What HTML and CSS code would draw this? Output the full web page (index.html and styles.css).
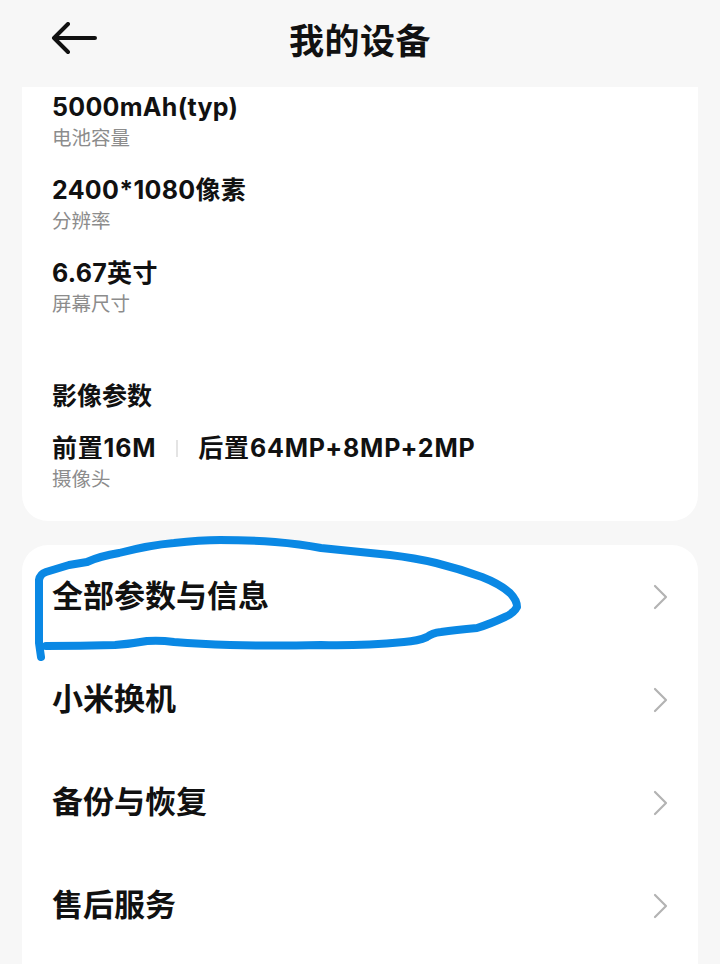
FILE: index.html
```html
<!DOCTYPE html>
<html lang="zh-CN">
<head>
    <meta charset="UTF-8">
    <meta name="viewport" content="width=device-width, initial-scale=1.0">
    <title>我的设备</title>
    <link rel="stylesheet" href="styles.css">
</head>
<body>
    <header class="top-bar">
        <div class="back-btn">
            <svg width="46" height="34" viewBox="0 0 46 34">
                <path d="M44 16H3M17 2L3 16l14 14" fill="none" stroke="#111" stroke-width="4" stroke-linecap="round" stroke-linejoin="round"/>
            </svg>
        </div>
        <h1 class="page-title">我的设备</h1>
        <div></div>
    </header>

    <section class="card spec-card">
        <div class="spec">
            <div class="spec-value">5000mAh(typ)</div>
            <div class="spec-label">电池容量</div>
        </div>
        <div class="spec">
            <div class="spec-value">2400*1080像素</div>
            <div class="spec-label">分辨率</div>
        </div>
        <div class="spec">
            <div class="spec-value">6.67英寸</div>
            <div class="spec-label">屏幕尺寸</div>
        </div>

        <h2 class="spec-heading">影像参数</h2>
        <div class="spec">
            <div class="spec-value camera">
                <span>前置16M</span>
                <span class="divider"></span>
                <span>后置64MP+8MP+2MP</span>
            </div>
            <div class="spec-label">摄像头</div>
        </div>
    </section>

    <section class="card menu-card">
        <div class="menu-row">
            <span>全部参数与信息</span>
            <svg class="chevron" width="16" height="26" viewBox="0 0 16 26"><path d="M2 2l11 11L2 24" fill="none" stroke="#b3b3b3" stroke-width="2.2" stroke-linecap="round" stroke-linejoin="round"/></svg>
        </div>
        <div class="menu-row">
            <span>小米换机</span>
            <svg class="chevron" width="16" height="26" viewBox="0 0 16 26"><path d="M2 2l11 11L2 24" fill="none" stroke="#b3b3b3" stroke-width="2.2" stroke-linecap="round" stroke-linejoin="round"/></svg>
        </div>
        <div class="menu-row">
            <span>备份与恢复</span>
            <svg class="chevron" width="16" height="26" viewBox="0 0 16 26"><path d="M2 2l11 11L2 24" fill="none" stroke="#b3b3b3" stroke-width="2.2" stroke-linecap="round" stroke-linejoin="round"/></svg>
        </div>
        <div class="menu-row">
            <span>售后服务</span>
            <svg class="chevron" width="16" height="26" viewBox="0 0 16 26"><path d="M2 2l11 11L2 24" fill="none" stroke="#b3b3b3" stroke-width="2.2" stroke-linecap="round" stroke-linejoin="round"/></svg>
        </div>
    </section>

    <!-- hand-drawn highlight over the first row -->
    <svg class="scribble" width="720" height="964" viewBox="0 0 720 964">
        <path d="M41 657 L39 643 L39 580 Q40 574 46 572 L69 565 L87 562 Q100 556 119 553 Q150 545 174 543 Q200 540 220 540 Q250 540 275 542 Q300 544 321 548 Q360 552 390 555 Q415 558 436 563 Q460 569 482 577 Q500 584 510 593 Q517 600 517 607 Q514 613 505 617 Q490 624 477 628 Q455 630 441 632 Q432 633 427 637 Q418 641 404 642 Q360 646 321 645 Q270 646 230 645 Q200 644 174 642 Q160 640 147 641 Q130 644 115 645 Q80 646 46 646" fill="none" stroke="#0a88e4" stroke-width="8" stroke-linecap="round" stroke-linejoin="round"/>
    </svg>
</body>
</html>
```

FILE: styles.css
```css
:root {
    --page-bg: #f7f7f7;
    --card-bg: #ffffff;
    --text-color: #111111;
    --muted-color: #8c8c8c;
}

* {
    margin: 0;
    padding: 0;
    box-sizing: border-box;
}

body {
    background-color: var(--page-bg);
    color: var(--text-color);
    font-family: "Noto Sans CJK SC", "Noto Sans", sans-serif;
    width: 720px;
    height: 964px;
    overflow: hidden;
    position: relative;
}

.top-bar {
    height: 87px;
    display: grid;
    grid-template-columns: 1fr auto 1fr;
    align-items: center;
    padding: 0 52px;
    padding-bottom: 10px;
}

.back-btn {
    display: flex;
    align-items: center;
    margin-left: -1px;
}

.page-title {
    font-size: 35px;
    font-weight: 700;
    letter-spacing: 0.5px;
}

.card {
    background-color: var(--card-bg);
    margin: 0 22px;
}

/* the first card is scrolled, so its top edge sits under the bar */
.spec-card {
    padding: 3px 30px 30px;
    border-radius: 0 0 26px 26px;
    display: flex;
    flex-direction: column;
    gap: 23px;
}

.spec-value {
    font-family: Inter, "Noto Sans CJK SC", sans-serif;
    font-size: 25px;
    font-weight: 700;
    line-height: 34px;
    letter-spacing: 0.3px;
}

.spec-label {
    font-size: 19.5px;
    color: var(--muted-color);
    line-height: 26px;
}

.spec-heading {
    font-size: 25px;
    font-weight: 700;
    line-height: 34px;
    margin-top: 38px;
    margin-bottom: -3px;
}

.camera {
    display: flex;
    align-items: center;
    gap: 20px;
    letter-spacing: 0.8px;
}

.divider {
    width: 2px;
    height: 17px;
    background-color: #e4e4e4;
}

.menu-card {
    margin-top: 24px;
    border-radius: 26px 26px 0 0;
    padding-bottom: 40px;
}

.menu-row {
    height: 103px;
    padding: 0 30px;
    display: flex;
    align-items: center;
    justify-content: space-between;
    font-size: 31px;
    font-weight: 700;
}

.menu-row span {
    margin-top: -7px;
}

.chevron {
    margin-right: -1px;
}

.scribble {
    position: absolute;
    top: 0;
    left: 0;
    pointer-events: none;
}
```
